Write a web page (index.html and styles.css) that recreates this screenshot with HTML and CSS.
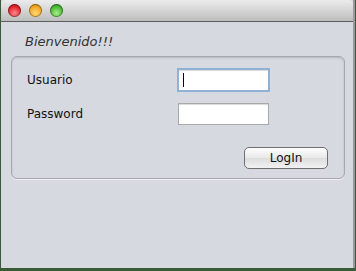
FILE: index.html
```html
<!DOCTYPE html>
<html lang="es">
<head>
  <meta charset="UTF-8">
  <title>Login</title>
  <link rel="stylesheet" href="styles.css">
</head>
<body>

<div class="window">
  <div class="titlebar">
    <span class="light red"></span>
    <span class="light yellow"></span>
    <span class="light green"></span>
  </div>

  <div class="content">
    <p class="welcome">Bienvenido!!!</p>

    <div class="panel">
      <div class="row">
        <label class="label">Usuario</label>
        <div class="field focused"><span class="caret"></span></div>
      </div>
      <div class="row">
        <label class="label">Password</label>
        <div class="field"></div>
      </div>
      <div class="actions">
        <button class="btn">LogIn</button>
      </div>
    </div>
  </div>
</div>

</body>
</html>
```

FILE: styles.css
```css
/* Fondo del escritorio */
body {
  margin: 0;
  background: #3b5a3a;
  font-family: 'DejaVu Sans', 'Liberation Sans', sans-serif;
  width: 356px;
  height: 271px;
  overflow: hidden;
}

/* Ventana */
.window {
  margin-left: 1px;
  width: 352px;
  height: 268px;
  background: #d6d9e0;
  border-right: 2px solid #9a9a9a;
  box-sizing: content-box;
}

/* Barra de título */
.titlebar {
  height: 21px;
  background: linear-gradient(#ececec, #bdbdbd);
  border-bottom: 1px solid #5e5e5e;
  border-radius: 4px 4px 0 0;
  display: flex;
  align-items: center;
  gap: 8px;
  padding-left: 7px;
}

.light {
  width: 13px;
  height: 13px;
  border-radius: 50%;
  box-shadow: inset 0 0 0 1px rgba(0, 0, 0, 0.35);
}

.red { background: radial-gradient(circle at 50% 70%, #ff8a8a, #e0202a 60%, #a30d14); }
.yellow { background: radial-gradient(circle at 50% 70%, #ffd77a, #f2a520 60%, #b77205); }
.green { background: radial-gradient(circle at 50% 70%, #a8f08a, #45b431 60%, #237a14); }

/* Contenido */
.content {
  padding: 12px 8px 0 10px;
}

.welcome {
  margin: 0 0 7px 14px;
  font-style: italic;
  font-size: 13px;
  color: #333;
}

/* Panel */
.panel {
  border: 1px solid #a6a8ad;
  border-radius: 6px;
  box-shadow: inset 0 1px 2px rgba(0, 0, 0, 0.15), 0 1px 0 #eef0f3;
  height: 123px;
  padding: 11px 16px 9px 15px;
  box-sizing: border-box;
  display: flex;
  flex-direction: column;
}

.row {
  display: flex;
  align-items: center;
  height: 24px;
  margin-bottom: 10px;
}

.label {
  width: 150px;
  font-size: 12px;
  color: #111;
}

.field {
  width: 85px;
  height: 20px;
  margin-left: 1px;
  background: #fff;
  border: 1px solid #a9a9a9;
  box-shadow: inset 0 1px 1px rgba(0, 0, 0, 0.15);
  display: flex;
  align-items: center;
  padding-left: 4px;
  box-sizing: content-box;
}

.field.focused {
  margin-left: 0;
  height: 20px;
  border: 2px solid #8fb1d6;
}

.caret {
  width: 1px;
  height: 14px;
  background: #000;
}

.actions {
  display: flex;
  justify-content: flex-end;
  margin-top: auto;
}

.btn {
  width: 84px;
  height: 22px;
  border: 1px solid #6f6f6f;
  border-radius: 5px;
  background: linear-gradient(#fdfdfd, #e8e8e8 50%, #dcdcdc 51%, #f2f2f2);
  font-family: 'DejaVu Sans', 'Liberation Sans', sans-serif;
  font-size: 12px;
  color: #111;
  padding: 0;
}
```
